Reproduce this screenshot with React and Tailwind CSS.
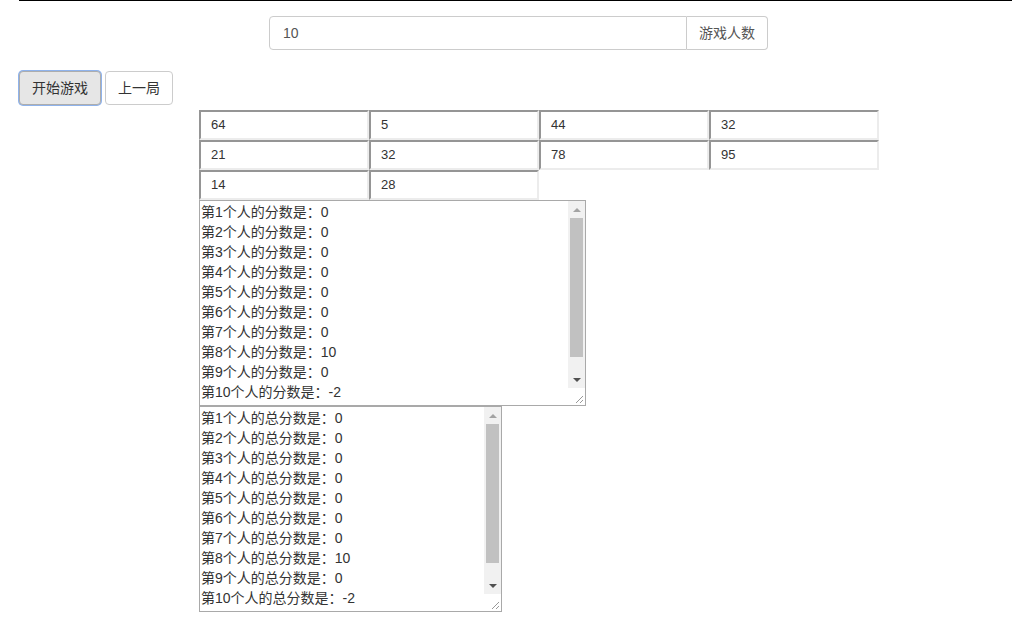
const nums = [64, 5, 44, 32, 21, 32, 78, 95, 14, 28];
const round = [0, 0, 0, 0, 0, 0, 0, 10, 0, -2];
const total = [0, 0, 0, 0, 0, 0, 0, 10, 0, -2];

const font = { fontFamily: '"Liberation Sans", "Noto Sans CJK SC", sans-serif' };

// fake classic scrollbar + resize corner, like a native textarea
function ScrollBar() {
  return (
    <div className="flex w-[17px] flex-col bg-[#f1f1f1]">
      <div className="flex h-[17px] items-center justify-center">
        <div className="h-0 w-0 border-x-[4px] border-b-[4px] border-x-transparent border-b-[#a3a3a3]" />
      </div>
      <div className="flex-1 px-[2px]">
        <div className="h-[139px] bg-[#c1c1c1]" />
      </div>
      <div className="flex h-[17px] items-center justify-center">
        <div className="h-0 w-0 border-x-[4px] border-t-[4px] border-x-transparent border-t-[#505050]" />
      </div>
      <div className="relative h-[17px] bg-white">
        <svg width="17" height="17" className="absolute left-0 top-0">
          <line x1="15" y1="8" x2="8" y2="15" stroke="#999" strokeWidth="1" />
          <line x1="15" y1="12" x2="12" y2="15" stroke="#999" strokeWidth="1" />
        </svg>
      </div>
    </div>
  );
}

function ScoreBox({ width, label, data }) {
  return (
    <div className={`ml-[199px] flex h-[206px] border border-[#a9a9a9] bg-white ${width}`}>
      <div className="flex-1 overflow-hidden px-[1px] pt-[1px] text-[14px] leading-[20px] text-[#333]">
        {data.map((v, i) => (
          <div key={i} className="whitespace-nowrap">
            第{i + 1}个人的{label}：{v}
          </div>
        ))}
      </div>
      <ScrollBar />
    </div>
  );
}

export default function App() {
  return (
    <div className="min-h-screen bg-white text-[#333]" style={font}>
      <div className="ml-[19px] h-px bg-black" />

      {/* player count */}
      <div className="ml-[269px] mt-[15px] flex h-[34px] w-[499px] text-[14px]">
        <div className="flex flex-1 items-center rounded-l-[4px] border border-[#ccc] px-[13px] text-[#555]">10</div>
        <div className="flex items-center rounded-r-[4px] border border-l-0 border-[#ccc] bg-white px-[12px] text-[#555]">
          游戏人数
        </div>
      </div>

      {/* buttons */}
      <div className="ml-[19px] mt-[21px] flex gap-[4px] text-[14px]">
        <button className="h-[34px] rounded-[4px] border border-[#adadad] bg-[#e6e6e6] px-[12px] shadow-[0_0_0_1px_#8fb3ec]">
          开始游戏
        </button>
        <button className="h-[34px] rounded-[4px] border border-[#ccc] bg-white px-[12px]">上一局</button>
      </div>

      {/* numbers grid */}
      <div className="ml-[199px] mt-[5px] grid grid-cols-[repeat(4,170px)]">
        {nums.map((n, i) => (
          <div
            key={i}
            className="flex h-[30px] items-center border-2 border-b-[#ececec] border-l-[#959595] border-r-[#ececec] border-t-[#959595] bg-white pl-[10px] text-[13px] text-[#333]"
          >
            {n}
          </div>
        ))}
      </div>

      <ScoreBox width="w-[387px]" label="分数是" data={round} />
      <ScoreBox width="w-[303px]" label="总分数是" data={total} />
    </div>
  );
}
